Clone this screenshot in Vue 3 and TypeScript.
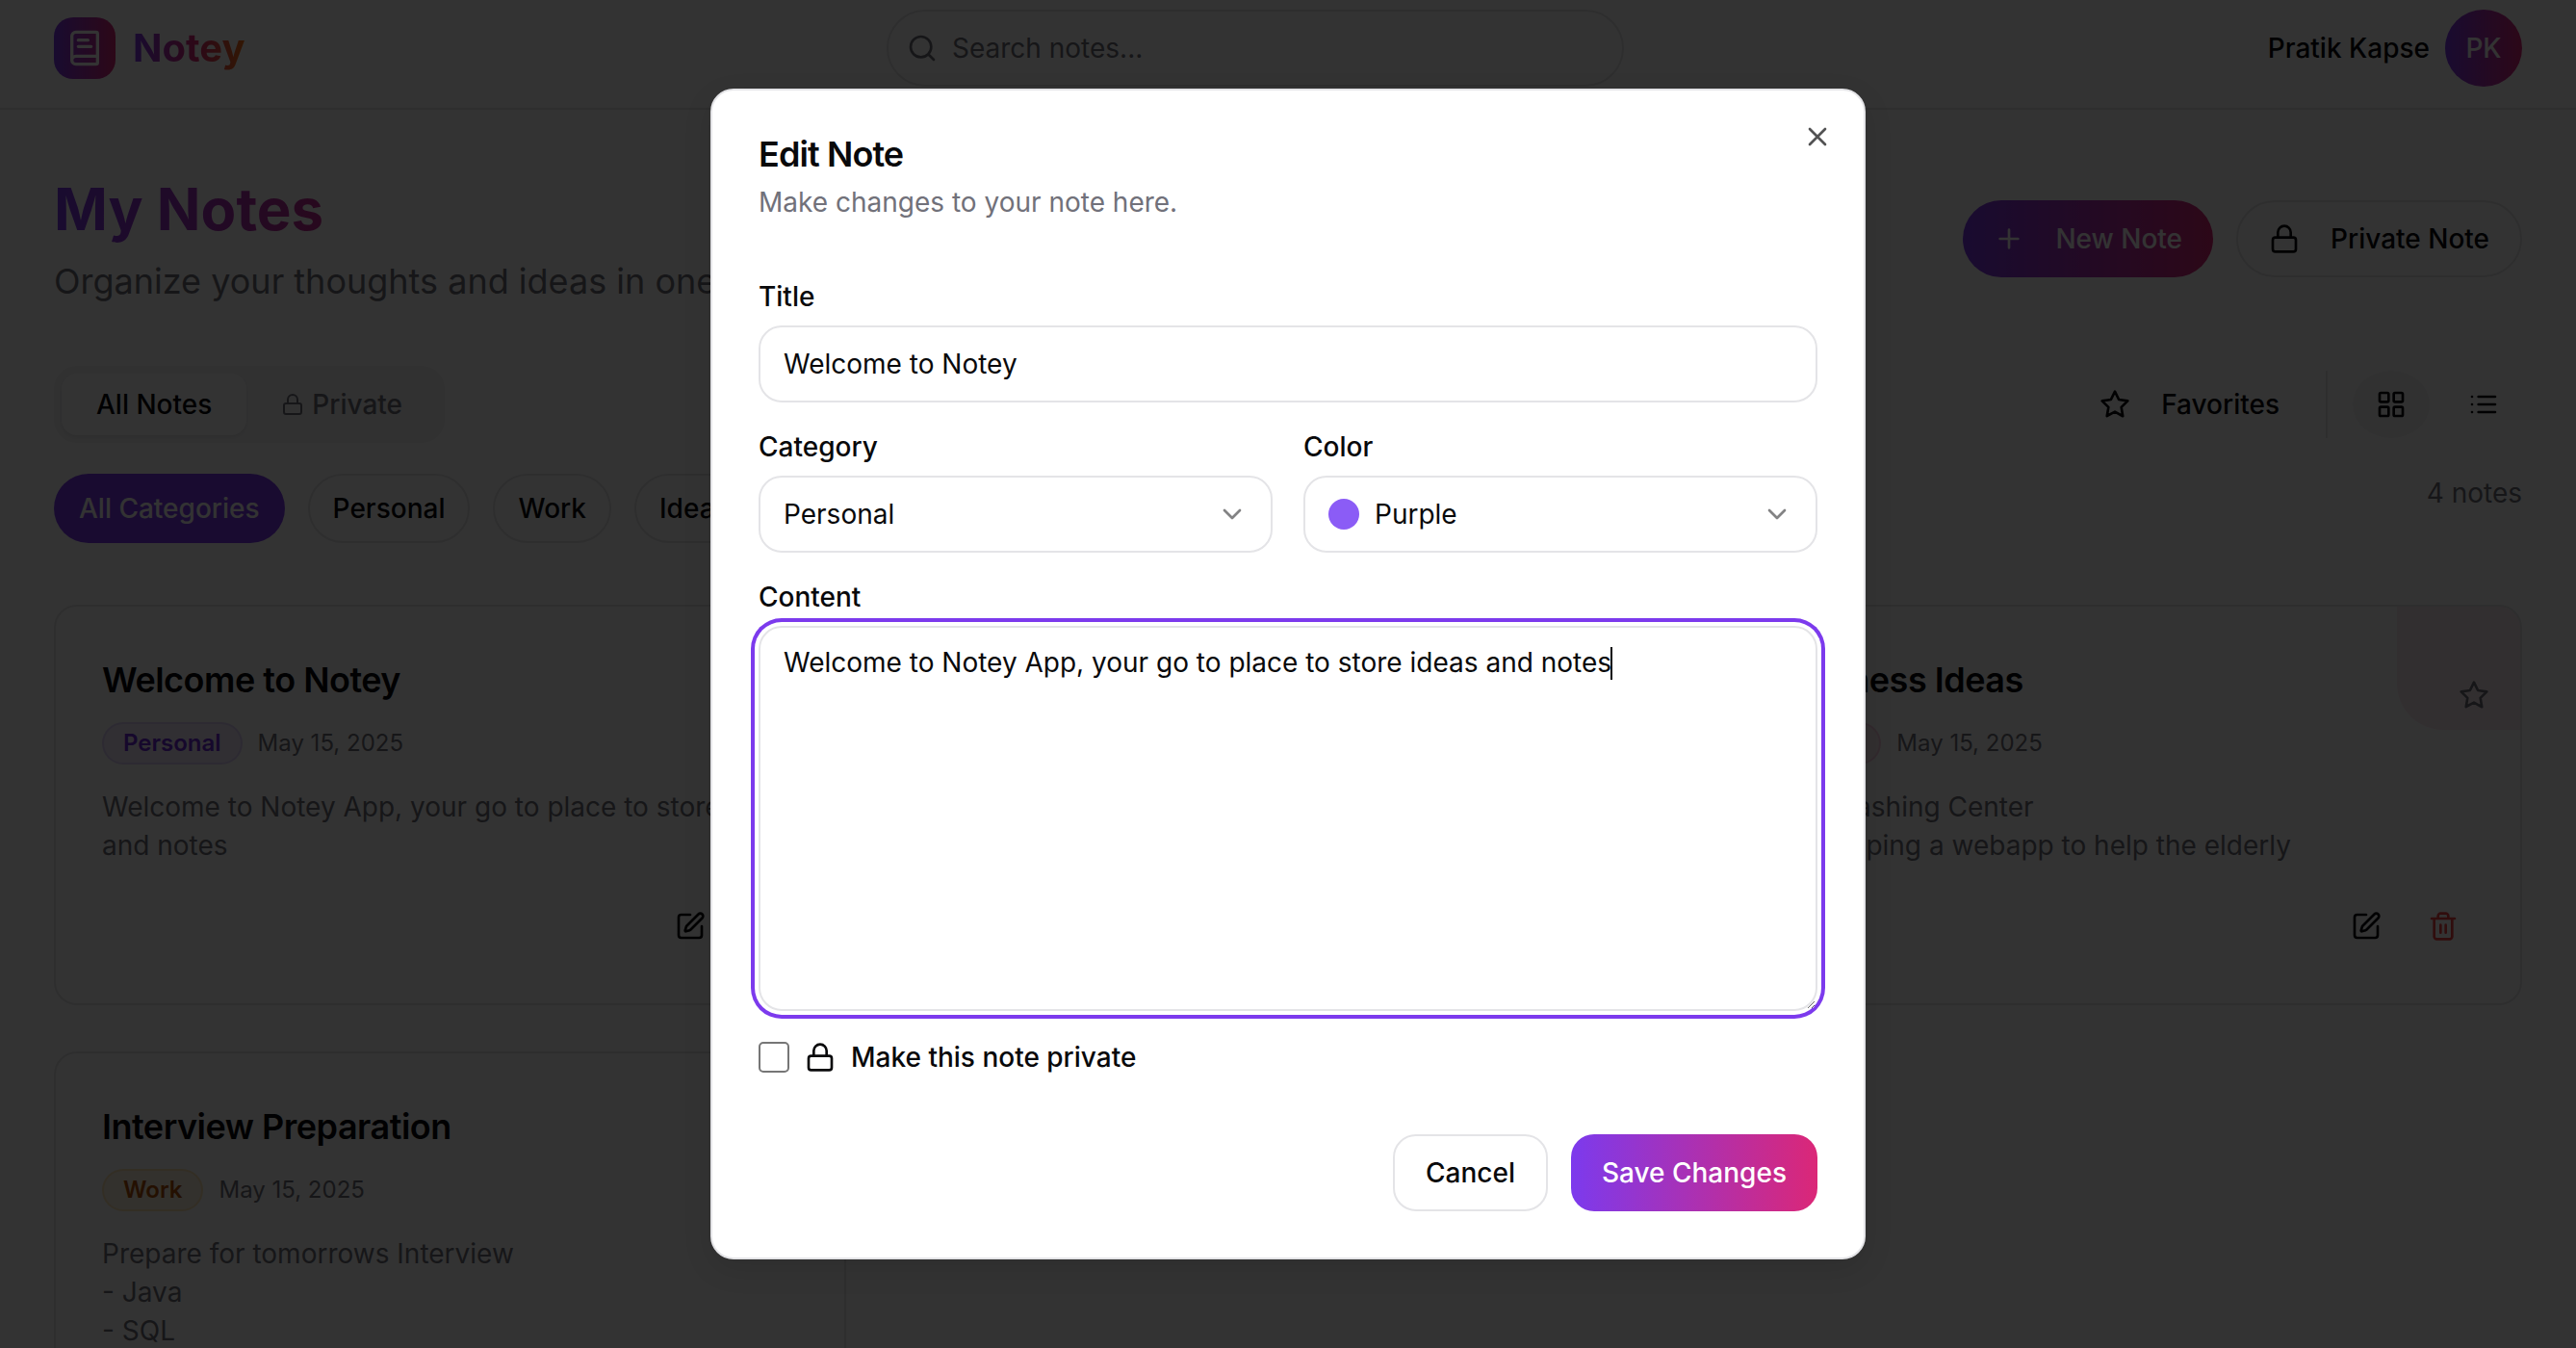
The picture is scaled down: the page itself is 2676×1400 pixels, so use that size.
<template>
  <div class="page">
    <header class="topbar">
      <div class="brand">
        <div class="logo">
          <svg class="ic ic-logo" viewBox="0 0 24 24"><path :d="icons.book" /></svg>
        </div>
        <span class="brand-name">Notey</span>
      </div>
      <div class="search">
        <svg class="ic" viewBox="0 0 24 24"><path :d="icons.search" /></svg>
        <span>Search notes...</span>
      </div>
      <div class="user">
        <span class="user-name">Pratik Kapse</span>
        <div class="avatar">PK</div>
      </div>
    </header>

    <main class="content">
      <section class="hero">
        <div>
          <h1>My Notes</h1>
          <p>Organize your thoughts and ideas in one place</p>
        </div>
        <div class="hero-actions">
          <button class="btn btn-primary">
            <svg class="ic" viewBox="0 0 24 24"><path :d="icons.plus" /></svg>
            New Note
          </button>
          <button class="btn btn-outline">
            <svg class="ic" viewBox="0 0 24 24"><path :d="icons.lock" /></svg>
            Private Note
          </button>
        </div>
      </section>

      <section class="toolbar">
        <div class="tabs">
          <div class="tab active">All Notes</div>
          <div class="tab">
            <svg class="ic ic-sm" viewBox="0 0 24 24"><path :d="icons.lock" /></svg>
            Private
          </div>
        </div>
        <div class="tools">
          <div class="favorites">
            <svg class="ic" viewBox="0 0 24 24"><path :d="icons.star" /></svg>
            Favorites
          </div>
          <div class="divider"></div>
          <div class="view active">
            <svg class="ic" viewBox="0 0 24 24"><path :d="icons.grid" /></svg>
          </div>
          <div class="view">
            <svg class="ic" viewBox="0 0 24 24"><path :d="icons.list" /></svg>
          </div>
        </div>
      </section>

      <section class="filters">
        <div class="pills">
          <div v-for="(c, i) in categories" :key="c" class="pill" :class="{ selected: i === 0 }">{{ c }}</div>
        </div>
        <span class="count">4 notes</span>
      </section>

      <section class="grid">
        <article v-for="note in notes" :key="note.id" class="card">
          <template v-if="note.title">
            <div class="corner" :class="note.tone">
              <svg class="ic" viewBox="0 0 24 24"><path :d="icons.star" /></svg>
            </div>
            <h3>{{ note.title }}</h3>
            <div class="meta">
              <span class="tag" :class="note.tone">{{ note.category }}</span>
              <span class="date">May 15, 2025</span>
            </div>
            <p class="body">{{ note.body }}</p>
            <div class="actions">
              <div class="act"><svg class="ic" viewBox="0 0 24 24"><path :d="icons.edit" /></svg></div>
              <div class="act danger"><svg class="ic" viewBox="0 0 24 24"><path :d="icons.trash" /></svg></div>
            </div>
          </template>
        </article>
      </section>
    </main>

    <div class="overlay">
      <div class="dialog">
        <svg class="ic close" viewBox="0 0 24 24"><path :d="icons.x" /></svg>
        <h2>Edit Note</h2>
        <p class="dialog-sub">Make changes to your note here.</p>

        <div class="form">
          <div class="field">
            <label>Title</label>
            <div class="control">Welcome to Notey</div>
          </div>
          <div class="two">
            <div class="field">
              <label>Category</label>
              <div class="control select">
                <span>Personal</span>
                <svg class="ic chevron" viewBox="0 0 24 24"><path :d="icons.chevron" /></svg>
              </div>
            </div>
            <div class="field">
              <label>Color</label>
              <div class="control select">
                <span class="swatch-row"><i class="swatch"></i>Purple</span>
                <svg class="ic chevron" viewBox="0 0 24 24"><path :d="icons.chevron" /></svg>
              </div>
            </div>
          </div>
          <div class="field">
            <label>Content</label>
            <div class="area-wrap">
              <textarea readonly :value="content"></textarea>
              <span class="caret"></span>
            </div>
          </div>
          <div class="private-row">
            <span class="checkbox"></span>
            <svg class="ic" viewBox="0 0 24 24"><path :d="icons.lock" /></svg>
            <span>Make this note private</span>
          </div>
        </div>

        <div class="dialog-foot">
          <button class="foot-btn cancel">Cancel</button>
          <button class="foot-btn save">Save Changes</button>
        </div>
      </div>
    </div>
  </div>
</template>

<script setup lang="ts">
const icons = {
  book: 'M4 19.5v-15A2.5 2.5 0 0 1 6.5 2H19a1 1 0 0 1 1 1v18a1 1 0 0 1-1 1H6.5a1 1 0 0 1 0-5H20M8 11h8M8 7h6',
  search: 'M19 11a8 8 0 1 1-16 0 8 8 0 0 1 16 0zM21 21l-4.3-4.3',
  plus: 'M5 12h14M12 5v14',
  lock: 'M5 11h14a2 2 0 0 1 2 2v7a2 2 0 0 1-2 2H5a2 2 0 0 1-2-2v-7a2 2 0 0 1 2-2zM7 11V7a5 5 0 0 1 10 0v4',
  star: 'M12 2l3.09 6.26L22 9.27l-5 4.87 1.18 7.03L12 17.77l-6.18 3.25L7 14.14 2 9.27l6.91-1.01L12 2z',
  grid: 'M4 3h5a1 1 0 0 1 1 1v5a1 1 0 0 1-1 1H4a1 1 0 0 1-1-1V4a1 1 0 0 1 1-1zM15 3h5a1 1 0 0 1 1 1v5a1 1 0 0 1-1 1h-5a1 1 0 0 1-1-1V4a1 1 0 0 1 1-1zM4 14h5a1 1 0 0 1 1 1v5a1 1 0 0 1-1 1H4a1 1 0 0 1-1-1v-5a1 1 0 0 1 1-1zM15 14h5a1 1 0 0 1 1 1v5a1 1 0 0 1-1 1h-5a1 1 0 0 1-1-1v-5a1 1 0 0 1 1-1z',
  list: 'M8 6h13M8 12h13M8 18h13M3 6h.01M3 12h.01M3 18h.01',
  edit: 'M12 3H5a2 2 0 0 0-2 2v14a2 2 0 0 0 2 2h14a2 2 0 0 0 2-2v-7M18.375 2.625a1 1 0 0 1 3 3l-9.013 9.014a2 2 0 0 1-.853.505l-2.873.84a.5.5 0 0 1-.62-.62l.84-2.873a2 2 0 0 1 .506-.852z',
  trash: 'M3 6h18M19 6v14c0 1-1 2-2 2H7c-1 0-2-1-2-2V6M8 6V4c0-1 1-2 2-2h4c1 0 2 1 2 2v2M10 11v6M14 11v6',
  chevron: 'm6 9 6 6 6-6',
  x: 'M18 6 6 18M6 6l12 12'
}

const categories = ['All Categories', 'Personal', 'Work', 'Ideas']

const notes = [
  { id: 1, title: 'Welcome to Notey', category: 'Personal', tone: 'purple', body: 'Welcome to Notey App, your go to place to store ideas and notes' },
  { id: 2, title: '', category: '', tone: '', body: '' },
  { id: 3, title: 'Business Ideas', category: 'Ideas', tone: 'pink', body: 'Car Washing Center\nDeveloping a webapp to help the elderly' },
  { id: 4, title: 'Interview Preparation', category: 'Work', tone: 'amber', body: 'Prepare for tomorrows Interview\n- Java\n- SQL' }
]

const content = 'Welcome to Notey App, your go to place to store ideas and notes'
</script>

<style>
html, body {
  margin: 0;
  background: #fff;
  overflow: hidden;
}
</style>

<style scoped>
.page {
  position: relative;
  height: 1400px;
  overflow: hidden;
  background: #fff;
  color: #09090b;
  font-family: Inter, "Liberation Sans", sans-serif;
  font-size: 28px;
  line-height: 40px;
}

.ic {
  width: 32px;
  height: 32px;
  flex: none;
  fill: none;
  stroke: currentColor;
  stroke-width: 2;
  stroke-linecap: round;
  stroke-linejoin: round;
}

.topbar {
  height: 114px;
  padding: 10px 56px 0;
  box-sizing: border-box;
  border-bottom: 2px solid #e4e4e7;
  display: flex;
  justify-content: space-between;
  align-items: flex-start;
}

.brand {
  width: 600px;
  display: flex;
  align-items: center;
  gap: 18px;
  padding-top: 8px;
}

.logo {
  width: 64px;
  height: 64px;
  border-radius: 20px;
  background: linear-gradient(90deg, #7c3aed, #db2777);
  color: #fff;
  display: flex;
  align-items: center;
  justify-content: center;
}

.ic-logo {
  width: 40px;
  height: 40px;
}

.brand-name {
  font-size: 40px;
  font-weight: 700;
  line-height: 64px;
  background: linear-gradient(90deg, #7c3aed, #db2777 55%, #f97316);
  -webkit-background-clip: text;
  background-clip: text;
  color: transparent;
}

.search {
  width: 766px;
  height: 80px;
  box-sizing: border-box;
  margin-left: 265px;
  border: 2px solid #e4e4e7;
  border-radius: 40px;
  padding-left: 19px;
  display: flex;
  align-items: center;
  gap: 15px;
  color: #71717a;
}

.user {
  display: flex;
  align-items: center;
  gap: 16px;
  margin-left: auto;
}

.user-name {
  font-weight: 500;
}

.avatar {
  width: 80px;
  height: 80px;
  border-radius: 50%;
  background: linear-gradient(90deg, #7c3aed, #db2777);
  color: #fff;
  font-weight: 500;
  display: flex;
  align-items: center;
  justify-content: center;
}

.content {
  padding: 67px 56px 0;
}

.hero {
  display: flex;
  justify-content: space-between;
  align-items: flex-start;
}

h1 {
  margin: 0;
  font-size: 60px;
  line-height: 72px;
  font-weight: 700;
  background: linear-gradient(90deg, #7c3aed, #db2777 130%);
  -webkit-background-clip: text;
  background-clip: text;
  color: transparent;
  width: max-content;
}

.hero p {
  margin: 11px 0 0;
  font-size: 36px;
  line-height: 56px;
  color: #71717a;
}

.hero-actions {
  display: flex;
  gap: 24px;
  margin-top: 27px;
}

.btn {
  height: 80px;
  box-sizing: border-box;
  border-radius: 40px;
  padding: 0 32px;
  display: flex;
  align-items: center;
  gap: 32px;
  font: 500 28px/40px Inter, "Liberation Sans", sans-serif;
  color: #09090b;
  background: #fff;
  border: 2px solid #e4e4e7;
}

.btn-primary {
  border: 0;
  color: #fff;
  background: linear-gradient(90deg, #7c3aed, #db2777);
}

.toolbar {
  margin-top: 60px;
  display: flex;
  justify-content: space-between;
  align-items: center;
  height: 80px;
}

.tabs {
  padding: 8px;
  border-radius: 24px;
  background: #f4f4f5;
  display: flex;
}

.tab {
  height: 64px;
  box-sizing: border-box;
  padding: 0 36px;
  border-radius: 16px;
  display: flex;
  align-items: center;
  gap: 8px;
  font-weight: 500;
  color: #71717a;
}

.tab.active {
  background: #fff;
  color: #09090b;
  box-shadow: 0 2px 4px rgba(0, 0, 0, 0.08);
}

.ic-sm {
  width: 24px;
  height: 24px;
}

.tools {
  display: flex;
  align-items: center;
}

.favorites {
  display: flex;
  align-items: center;
  gap: 32px;
  font-weight: 500;
  padding-right: 48px;
}

.divider {
  width: 2px;
  height: 70px;
  background: #e4e4e7;
  margin-right: 26px;
}

.view {
  width: 80px;
  height: 70px;
  border-radius: 50%;
  display: flex;
  align-items: center;
  justify-content: center;
}

.view.active {
  background: #f4f4f5;
  margin-right: 16px;
}

.filters {
  margin-top: 32px;
  display: flex;
  justify-content: space-between;
  align-items: flex-start;
}

.pills {
  display: flex;
  gap: 24px;
}

.pill {
  height: 72px;
  box-sizing: border-box;
  padding: 0 24px;
  border: 2px solid #e4e4e7;
  border-radius: 36px;
  display: flex;
  align-items: center;
  font-weight: 500;
}

.pill.selected {
  border: 0;
  padding: 0 26px;
  color: #fff;
  background: #7c3aed;
}

.count {
  color: #71717a;
}

.grid {
  margin-top: 64px;
  display: grid;
  grid-template-columns: repeat(3, 1fr);
  gap: 48px;
}

.card {
  position: relative;
  box-sizing: border-box;
  min-height: 416px;
  padding: 48px;
  border: 2px solid #e4e4e7;
  border-radius: 24px;
  overflow: hidden;
  display: flex;
  flex-direction: column;
}

.card h3 {
  margin: 0;
  font-size: 36px;
  line-height: 56px;
  font-weight: 600;
  letter-spacing: -0.5px;
}

.corner {
  position: absolute;
  top: 0;
  right: 0;
  width: 128px;
  height: 128px;
  box-sizing: border-box;
  padding: 0 32px 20px 48px;
  border-bottom-left-radius: 48px;
  display: flex;
  align-items: flex-end;
  justify-content: flex-end;
  color: #71717a;
}

.corner.purple { background: rgba(124, 58, 237, 0.06); }
.corner.pink { background: rgba(219, 39, 119, 0.1); }
.corner.amber { background: rgba(245, 158, 11, 0.1); }

.meta {
  margin-top: 16px;
  display: flex;
  align-items: center;
  gap: 16px;
  font-size: 24px;
}

.tag {
  height: 44px;
  box-sizing: border-box;
  padding: 0 20px;
  border: 2px solid transparent;
  border-radius: 22px;
  display: flex;
  align-items: center;
  font-weight: 600;
}

.tag.purple {
  color: #6d28d9;
  background: rgba(124, 58, 237, 0.1);
  border-color: rgba(124, 58, 237, 0.15);
}

.tag.pink {
  color: #be185d;
  background: rgba(219, 39, 119, 0.1);
  border-color: rgba(219, 39, 119, 0.15);
}

.tag.amber {
  color: #b45309;
  background: rgba(245, 158, 11, 0.12);
  border-color: rgba(245, 158, 11, 0.2);
}

.date {
  color: #71717a;
}

.body {
  margin: 24px 0 0;
  color: #71717a;
  white-space: pre-line;
}

.actions {
  margin-top: auto;
  display: flex;
  justify-content: flex-end;
  gap: 16px;
}

.act {
  width: 64px;
  height: 64px;
  display: flex;
  align-items: center;
  justify-content: center;
}

.act.danger {
  color: #ef4444;
}

.overlay {
  position: absolute;
  inset: 0;
  background: rgba(0, 0, 0, 0.8);
  display: flex;
  align-items: center;
  justify-content: center;
}

.dialog {
  position: relative;
  width: 1200px;
  box-sizing: border-box;
  padding: 48px;
  background: #fff;
  border: 2px solid #e4e4e7;
  border-radius: 24px;
  box-shadow: 0 10px 30px rgba(0, 0, 0, 0.1);
}

.close {
  position: absolute;
  top: 32px;
  right: 32px;
  color: #09090b;
  opacity: 0.7;
}

.dialog h2 {
  margin: 0;
  font-size: 36px;
  line-height: 36px;
  font-weight: 600;
  letter-spacing: -0.9px;
}

.dialog-sub {
  margin: 12px 0 0;
  color: #71717a;
}

.form {
  margin-top: 64px;
  display: flex;
  flex-direction: column;
  gap: 32px;
}

.field {
  display: flex;
  flex-direction: column;
  gap: 16px;
  min-width: 0;
}

.field label {
  font-weight: 500;
  line-height: 28px;
}

.control {
  height: 80px;
  box-sizing: border-box;
  padding: 0 24px;
  border: 2px solid #e4e4e7;
  border-radius: 24px;
  display: flex;
  align-items: center;
}

.two {
  display: grid;
  grid-template-columns: 1fr 1fr;
  gap: 32px;
}

.select {
  justify-content: space-between;
}

.chevron {
  opacity: 0.5;
}

.swatch-row {
  display: flex;
  align-items: center;
  gap: 16px;
}

.swatch {
  width: 32px;
  height: 32px;
  border-radius: 50%;
  background: #8b5cf6;
}

.area-wrap {
  position: relative;
  height: 400px;
}

textarea {
  display: block;
  width: 100%;
  height: 100%;
  box-sizing: border-box;
  margin: 0;
  padding: 16px 24px;
  border: 2px solid #e4e4e7;
  border-radius: 24px;
  background: #fff;
  color: #09090b;
  font: 400 28px/40px Inter, "Liberation Sans", sans-serif;
  outline: none;
  box-shadow: 0 0 0 4px #fff, 0 0 0 8px #7c3aed;
}

.caret {
  position: absolute;
  left: 885px;
  top: 22px;
  width: 2px;
  height: 34px;
  background: #09090b;
}

.private-row {
  display: flex;
  align-items: center;
  gap: 16px;
  height: 32px;
  font-weight: 500;
}

.checkbox {
  width: 32px;
  height: 32px;
  box-sizing: border-box;
  border: 2px solid #767676;
  border-radius: 5px;
}

.dialog-foot {
  margin-top: 64px;
  display: flex;
  justify-content: flex-end;
  gap: 24px;
}

.foot-btn {
  height: 80px;
  box-sizing: border-box;
  padding: 0 32px;
  border-radius: 24px;
  font: 500 28px/40px Inter, "Liberation Sans", sans-serif;
}

.cancel {
  background: #fff;
  color: #09090b;
  border: 2px solid #e4e4e7;
}

.save {
  border: 0;
  color: #fff;
  background: linear-gradient(90deg, #7c3aed, #db2777);
}
</style>
